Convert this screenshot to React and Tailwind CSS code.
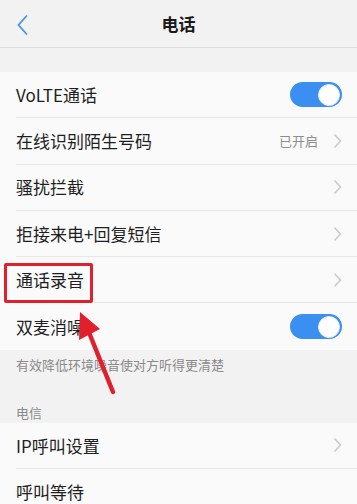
import React from 'react';

const Chevron = () => (
  <svg width="9" height="16" viewBox="0 0 9 16" className="shrink-0">
    <path d="M1.5 1.5 L7.5 8 L1.5 14.5" fill="none" stroke="#c9c9c9" strokeWidth="1.5" />
  </svg>
);

const Toggle = () => (
  <div className="w-[52px] h-[25px] rounded-full bg-[#3b8ff0] flex items-center justify-end pr-[2px]">
    <div className="w-[22px] h-[22px] rounded-full bg-white border border-[#e2ecf8]" />
  </div>
);

const Row = ({ label, right, last }) => (
  <div className="h-[46.3px] pl-4 flex">
    <div className={`flex-1 flex items-center justify-between pr-[15px] ${last ? '' : 'border-b border-[#e6e6e6]'}`}>
      <span className="text-[17px] text-[#1f1f1f]">{label}</span>
      {right}
    </div>
  </div>
);

export default function App() {
  const font = { fontFamily: '"Noto Sans CJK SC", "Noto Sans", sans-serif' };
  return (
    <div className="relative w-[357px] h-[504px] overflow-hidden bg-[#f2f2f2]" style={font}>
      <header className="h-[48px] flex items-center justify-center relative border-b border-[#dcdcdc] bg-[#f2f2f2]">
        <svg width="14" height="22" viewBox="0 0 14 22" className="absolute left-[16px] top-[14px]">
          <path d="M11 1.5 L2.5 11 L11 20.5" fill="none" stroke="#4a94e4" strokeWidth="1.8" />
        </svg>
        <h1 className="text-[17px] font-bold text-[#1a1a1a]">电话</h1>
      </header>

      <div className="h-[24px]" />

      <section className="bg-[#fafafa]">
        <Row label="VoLTE通话" right={<Toggle />} />
        <Row
          label="在线识别陌生号码"
          right={
            <div className="flex items-center gap-[15px]">
              <span className="text-[13px] text-[#8c8c8c]">已开启</span>
              <Chevron />
            </div>
          }
        />
        <Row label="骚扰拦截" right={<Chevron />} />
        <Row label="拒接来电+回复短信" right={<Chevron />} />
        <Row label="通话录音" right={<Chevron />} />
        <Row label="双麦消噪" right={<Toggle />} last />
      </section>

      <div className="px-4 pt-[5px] h-[73px] flex flex-col">
        <p className="text-[13px] text-[#8a8a8a] leading-[20px]">有效降低环境噪音使对方听得更清楚</p>
        <p className="text-[13px] text-[#8a8a8a] leading-[20px] mt-[28px]">电信</p>
      </div>

      <section className="bg-[#fafafa]">
        <Row label="IP呼叫设置" right={<Chevron />} />
        <Row label="呼叫等待" right={null} last />
      </section>

      {/* annotation: red frame */}
      <div className="absolute left-[4px] top-[263px] w-[89px] h-[40px] border-[3px] border-[#e0202c] rounded-[2px]" />
      {/* annotation: red arrow */}
      <svg className="absolute left-0 top-0" width="357" height="504" viewBox="0 0 357 504">
        <line x1="113" y1="392" x2="88" y2="330" stroke="#e0202c" strokeWidth="4.5" strokeLinecap="round" />
        <polygon points="80,312 100,329 79,340" fill="#e0202c" />
      </svg>
    </div>
  );
}
